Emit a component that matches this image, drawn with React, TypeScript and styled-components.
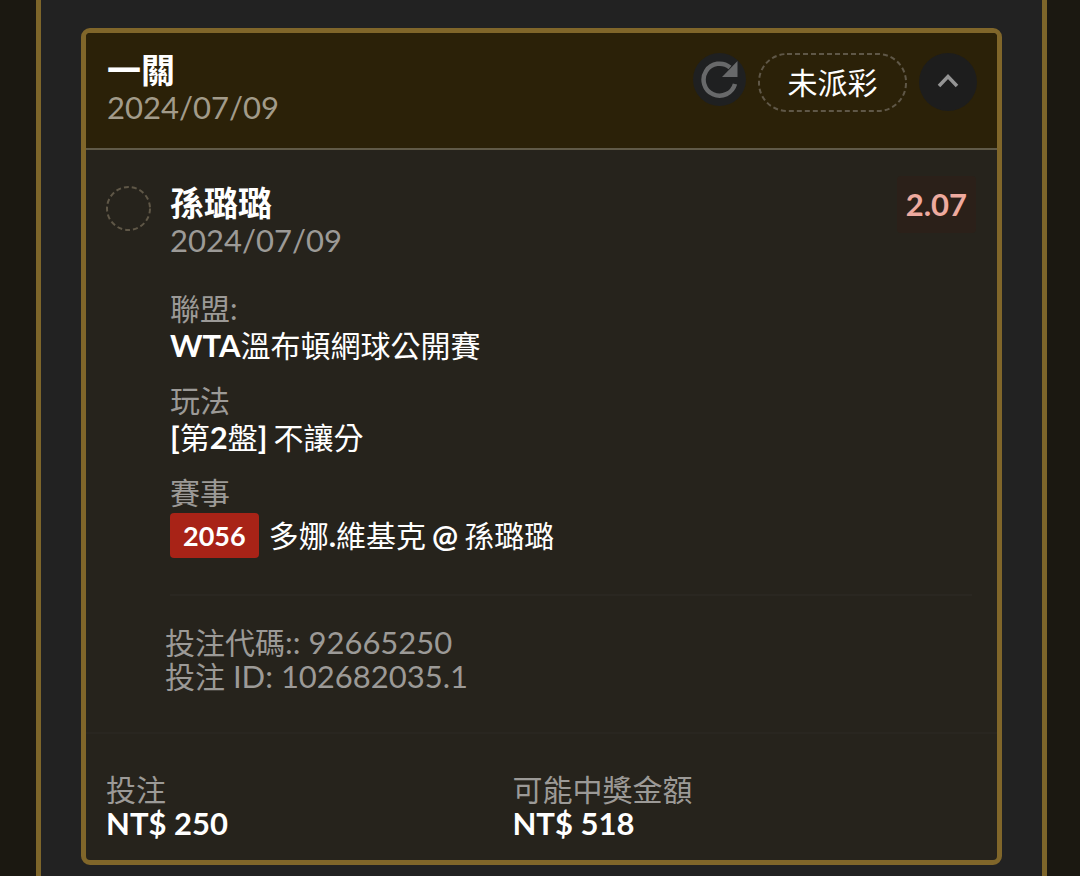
import React from 'react';
import styled, { createGlobalStyle } from 'styled-components';

const Global = createGlobalStyle`
  * { box-sizing: border-box; }
  body {
    margin: 0;
    background: #1b1811;
    color: #fff;
    font-family: Lato, "Noto Sans CJK TC", sans-serif;
    font-size: 30px;
    line-height: 37px;
  }
  h1, h2, p, dl, dt, dd { margin: 0; font-weight: 400; }
`;

const Panel = styled.main`
  min-height: 100vh;
  margin: 0 33px 0 36px;
  padding: 28px 40px 11px;
  background: #222222;
  border: solid #7d652a;
  border-width: 0 5px;
`;

const Card = styled.article`
  border: 5px solid #80662a;
  border-radius: 9px;
  background: #26231c;
  overflow: hidden;
`;

const CardHeader = styled.header`
  display: flex;
  justify-content: space-between;
  align-items: flex-start;
  padding: 18px 20px 22px 21px;
  background: #2b2108;
  border-bottom: 2px solid #605a48;
`;

const Title = styled.h1`
  && { font-weight: 700; }
  font-size: 34px;
  line-height: 38px;
`;

const DateText = styled.time<{ $warm?: boolean }>`
  display: block;
  font-size: 31px;
  color: ${p => (p.$warm ? '#a29b8a' : '#9c9a97')};
`;

const Actions = styled.div`
  display: flex;
  align-items: flex-start;
  gap: 12px;
  padding-top: 2px;
`;

const RoundButton = styled.button<{ $size: number; $tone: string }>`
  display: grid;
  place-items: center;
  width: ${p => p.$size}px;
  height: ${p => p.$size}px;
  padding: 0 0 2px;
  border: 0;
  border-radius: 50%;
  background: ${p => p.$tone};
`;

const Outline = styled.svg`
  display: block;
  fill: none;
  stroke: #5f5747;
  stroke-width: 2;
  stroke-dasharray: 5 3;
`;

const StatusPill = styled.span`
  display: grid;
  place-items: center;
  width: 149px;
  height: 59px;
  > * { grid-area: 1 / 1; }
`;

const Selection = styled.section`
  display: flex;
  align-items: flex-start;
  gap: 19px;
  padding: 34px 20px 39px;
`;

const Marker = styled.span`
  flex: none;
  padding-top: 2px;
`;

const Details = styled.div`
  flex: 1;
  min-width: 0;
`;

const SelectionHead = styled.div`
  display: flex;
  justify-content: space-between;
  align-items: flex-start;
`;

const Odds = styled.strong`
  margin: -8px 1px 0 0;
  padding: 10px 9px;
  border-radius: 4px;
  background: #2b2019;
  color: #eeaa9f;
  font-size: 31px;
`;

const Facts = styled.dl`
  display: grid;
  gap: 18px;
  padding: 31px 0 36px;
  margin-right: 5px;
  border-bottom: 2px solid #2a2721;
`;

const Label = styled.dt`
  color: #9c9a97;
`;

const Value = styled.dd`
  display: flex;
  align-items: center;
  gap: 6px;
`;

const MatchValue = styled(Value)`
  gap: 10px;
  padding-top: 2px;
`;

const Teams = styled.span`
  display: flex;
  gap: 6px;
`;

const Latin = styled.span<{ $bold?: boolean }>`
  font-size: 31px;
  font-weight: ${p => (p.$bold ? 700 : 400)};
`;

const Badge = styled.b`
  padding: 4px 13px;
  border-radius: 4px;
  background: #a82317;
  font-size: 27px;
`;

const Codes = styled.div`
  margin-left: -5px;
  padding-top: 29px;
  color: #9c9a97;
  line-height: 34px;
`;

const Totals = styled.dl`
  display: grid;
  grid-template-columns: 7fr 8fr;
  padding: 38px 20px 20px;
  border-top: 2px solid #292620;
  line-height: 34px;
`;

export default function App() {
  return (
    <>
      <Global />
      <Panel>
        <Card>
          <CardHeader>
            <div>
              <Title>一關</Title>
              <DateText $warm dateTime="2024-07-09">2024/07/09</DateText>
            </div>
            <Actions>
              <RoundButton $size={53} $tone="#1f2021" aria-label="重新整理">
                <svg width="37" height="38" viewBox="0 0 37 38">
                  <path d="M34 24A16 16 0 1 1 29 7.500" fill="none" stroke="#68696a" strokeWidth="4.500" />
                  <path d="M36.500 1V17H21Z" fill="#68696a" />
                </svg>
              </RoundButton>
              <StatusPill>
                <Outline width="149" height="59" aria-hidden="true">
                  <rect x="1" y="1" width="147" height="57" rx="28" />
                </Outline>
                <span>未派彩</span>
              </StatusPill>
              <RoundButton $size={58} $tone="#1d1d1d" aria-label="收合">
                <svg width="22" height="16" viewBox="0 0 22 16">
                  <path d="M2 13L11 3.500L20 13" fill="none" stroke="#949494" strokeWidth="3.500" />
                </svg>
              </RoundButton>
            </Actions>
          </CardHeader>

          <Selection>
            <Marker>
              <Outline width="45" height="45" aria-hidden="true">
                <circle cx="22.500" cy="22.500" r="21.500" />
              </Outline>
            </Marker>
            <Details>
              <SelectionHead>
                <div>
                  <Title as="h2">孫璐璐</Title>
                  <DateText dateTime="2024-07-09">2024/07/09</DateText>
                </div>
                <Odds>2.07</Odds>
              </SelectionHead>
              <Facts>
                <div>
                  <Label>聯盟:</Label>
                  <Value><span><Latin $bold>WTA</Latin>溫布頓網球公開賽</span></Value>
                </div>
                <div>
                  <Label>玩法</Label>
                  <Value>
                    <span>
                      <Latin $bold>[</Latin>第<Latin $bold>2</Latin>盤<Latin $bold>]</Latin>
                    </span>
                    <span>不讓分</span>
                  </Value>
                </div>
                <div>
                  <Label>賽事</Label>
                  <MatchValue>
                    <Badge>2056</Badge>
                    <Teams>
                      <span>多娜<Latin $bold>.</Latin>維基克</span>
                      <Latin $bold>@</Latin>
                      <span>孫璐璐</span>
                    </Teams>
                  </MatchValue>
                </div>
              </Facts>
              <Codes>
                <p>投注代碼<Latin>:: 92665250</Latin></p>
                <p>投注<Latin> ID: 102682035.1</Latin></p>
              </Codes>
            </Details>
          </Selection>

          <Totals>
            <div>
              <Label>投注</Label>
              <dd><Latin $bold>NT$ 250</Latin></dd>
            </div>
            <div>
              <Label>可能中獎金額</Label>
              <dd><Latin $bold>NT$ 518</Latin></dd>
            </div>
          </Totals>
        </Card>
      </Panel>
    </>
  );
}
